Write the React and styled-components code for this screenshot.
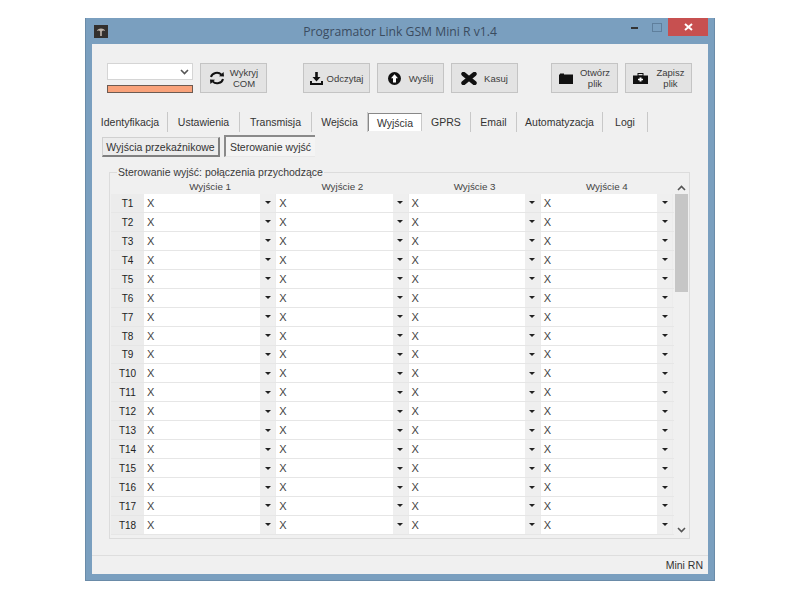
import React from "react";
import styled, { createGlobalStyle } from "styled-components";

const GlobalStyle = createGlobalStyle`
  html, body { margin: 0; padding: 0; background: #fff; }
  body { font-family: "Liberation Sans", Arial, sans-serif; color: #333; }
`;

const Page = styled.div`
  width: 800px;
  height: 600px;
  padding: 18px 0 0 85px;
  box-sizing: border-box;
  overflow: hidden;
`;

const Win = styled.div`
  width: 630px;
  height: 563px;
  box-sizing: border-box;
  background: #7a9fbf;
  border: 1px solid #6a8ba8;
  border-top: 0;
  padding: 0 6px 6px 6px;
  display: flex;
  flex-direction: column;
`;

const TitleBar = styled.div`
  height: 26px;
  flex: none;
  display: grid;
  grid-template-columns: 1fr auto 1fr;
  align-items: center;
`;

const TitleText = styled.div`
  font-family: "Open Sans", "Liberation Sans", sans-serif;
  font-size: 12.2px;
  color: #3a4c5f;
  white-space: nowrap;
`;

const AppIcon = styled.svg`
  width: 14px;
  height: 13px;
  margin-left: 2px;
  display: block;
`;

const WinControls = styled.div`
  display: flex;
  align-self: start;
  justify-self: end;
`;

const Ctl = styled.div`
  width: ${(p) => p.$w}px;
  height: 18px;
  background: ${(p) => (p.$close ? "#c75050" : "transparent")};
  display: flex;
  align-items: center;
  justify-content: center;
`;

const Client = styled.div`
  flex: 1;
  background: #f0f0f0;
  display: flex;
  flex-direction: column;
  min-height: 0;
`;

const Toolbar = styled.div`
  display: flex;
  align-items: flex-start;
  padding: 19px 0 0 15px;
  height: 45px;
  flex: none;
`;

const ComBox = styled.div`
  width: 86px;
  display: flex;
  flex-direction: column;
  gap: 5px;
  margin-right: 7px;
`;

const ComSelect = styled.div`
  height: 17px;
  background: #fff;
  border: 1px solid #d5d5d5;
  box-sizing: border-box;
  display: flex;
  align-items: center;
  justify-content: flex-end;
  padding-right: 3px;
`;

const ComBar = styled.div`
  height: 8px;
  background: #f9a27a;
  border: 1px solid #6d5b52;
  box-sizing: border-box;
`;

const ToolButton = styled.div`
  width: ${(p) => p.$w}px;
  height: 30px;
  margin-left: ${(p) => p.$gap || 0}px;
  box-sizing: border-box;
  background: #e3e3e3;
  border: 1px solid #c4c4c4;
  display: flex;
  align-items: center;
  justify-content: center;
  gap: ${(p) => p.$iconGap ?? 5}px;
  font-size: 9.5px;
  line-height: 11px;
  color: #3c3c3c;
  text-align: center;
`;

const Tabs = styled.div`
  display: flex;
  align-items: center;
  margin-top: 4px;
  padding-left: 1px;
  height: 20px;
  flex: none;
`;

const Tab = styled.div`
  height: ${(p) => (p.$active ? 18 : 20)}px;
  width: ${(p) => p.$w}px;
  font-size: 10.5px;
  display: flex;
  align-items: center;
  justify-content: center;
  box-sizing: border-box;
  color: #333;
  white-space: nowrap;
  background: ${(p) => (p.$active ? "#fff" : "transparent")};
  border-right: 1px solid #c8c8c8;
  border-left: ${(p) => (p.$active ? "1px solid #888" : "none")};
  border-top: ${(p) => (p.$active ? "1px solid #888" : "none")};
`;

const SubTabs = styled.div`
  display: flex;
  align-items: flex-end;
  padding: 3px 0 0 10px;
  gap: 4px;
  flex: none;
`;

const SubTab = styled.div`
  height: ${(p) => (p.$active ? 22 : 20)}px;
  width: ${(p) => p.$w}px;
  box-sizing: border-box;
  font-size: 10.5px;
  display: flex;
  align-items: center;
  justify-content: center;
  white-space: nowrap;
  color: #333;
  background: ${(p) => (p.$active ? "#f4f4f4" : "#ececec")};
  border-style: solid;
  border-width: ${(p) => (p.$active ? "2px 0 1px 2px" : "1px 2px 2px 1px")};
  border-color: ${(p) => (p.$active ? "#8a8a8a #eee #e8e8e8 #8a8a8a" : "#d0d0d0 #808080 #808080 #d0d0d0")};
`;

const Group = styled.div`
  margin: 15px 0 0 17px;
  width: 581px;
  height: 367px;
  box-sizing: border-box;
  border: 1px solid #dcdcdc;
  position: relative;
  padding: 8px 1px 0 1px;
  display: flex;
`;

const GroupTitle = styled.div`
  position: absolute;
  top: -7px;
  left: 7px;
  background: #f0f0f0;
  font-size: 10.5px;
  padding: 0 1px;
  color: #3a3a3a;
  line-height: 12px;
`;

const Grid = styled.div`
  width: 563px;
  flex: none;
`;

const HeadRow = styled.div`
  display: grid;
  grid-template-columns: 33px repeat(4, 132.25px);
  height: 13px;
  font-size: 9.8px;
  line-height: 12px;
  text-align: center;
  color: #444;
`;

const Row = styled.div`
  display: grid;
  grid-template-columns: 33px repeat(4, 132.25px);
  height: 18.95px;
  box-sizing: border-box;
  border-bottom: 1px solid #e6e6e6;
`;

const RowLabel = styled.div`
  background: #ececec;
  font-size: 10px;
  color: #222;
  display: flex;
  align-items: center;
  justify-content: center;
  padding-top: 1px;
`;

const Cell = styled.div`
  background: #fff;
  display: flex;
  border-right: 1px solid #ececec;
  font-size: 11px;
  color: #444;
`;

const CellValue = styled.div`
  flex: 1;
  padding-left: 3px;
  display: flex;
  align-items: center;
`;

const CellArrow = styled.div`
  width: 15px;
  background: #efefef;
  display: flex;
  align-items: center;
  justify-content: center;
  &::after {
    content: "";
    border: 3px solid transparent;
    border-top: 3px solid #222;
    border-bottom: 0;
  }
`;

const Scroll = styled.div`
  width: 15px;
  display: flex;
  flex-direction: column;
  align-items: center;
  height: 355px;
`;

const ScrollBtn = styled.div`
  height: 13px;
  flex: none;
  display: flex;
  align-items: center;
  justify-content: center;
`;

const ScrollThumb = styled.div`
  width: 13px;
  height: 98px;
  background: #c6c6c6;
`;

const ScrollRest = styled.div`
  flex: 1;
`;

const StatusBar = styled.div`
  margin-top: 16px;
  flex: 1;
  border-top: 1px solid #dedede;
  font-size: 10.5px;
  color: #333;
  display: flex;
  align-items: center;
  justify-content: flex-end;
  padding-right: 5px;
`;

const Chevron = ({ up }) => (
  <svg width="9" height="6" viewBox="0 0 9 6">
    <path d={up ? "M1 5L4.5 1.5L8 5" : "M1 1L4.5 4.5L8 1"} fill="none" stroke="#555" strokeWidth="1.6" />
  </svg>
);

const SyncIcon = () => (
  <svg width="16" height="14" viewBox="0 0 16 14">
    <path d="M2 6A6 5.4 0 0 1 12.4 3.6" fill="none" stroke="#111" strokeWidth="2" />
    <path d="M10 5.2L15 5.6L14.6 1Z" fill="#111" />
    <path d="M14 8A6 5.4 0 0 1 3.6 10.4" fill="none" stroke="#111" strokeWidth="2" />
    <path d="M6 8.8L1 8.4L1.4 13Z" fill="#111" />
  </svg>
);

const DownloadIcon = () => (
  <svg width="13" height="13" viewBox="0 0 13 13">
    <path d="M5.2 0H7.8V5H10.5L6.5 9.5L2.5 5H5.2Z" fill="#111" />
    <path d="M0 9H2V11H11V9H13V13H0Z" fill="#111" />
  </svg>
);

const UploadIcon = () => (
  <svg width="13" height="13" viewBox="0 0 13 13">
    <circle cx="6.5" cy="6.5" r="6.5" fill="#111" />
    <path d="M6.5 2.2L10 6.2H8V10.5H5V6.2H3Z" fill="#fff" />
  </svg>
);

const CrossIcon = () => (
  <svg width="16" height="13" viewBox="0 0 16 13">
    <path d="M2.5 2L13.5 11M13.5 2L2.5 11" stroke="#111" strokeWidth="4.4" strokeLinecap="round" />
  </svg>
);

const FolderIcon = () => (
  <svg width="14" height="11" viewBox="0 0 14 11">
    <path d="M0 1.5H1V0.5H5V1.5H14V11H0Z" fill="#111" />
  </svg>
);

const SaveIcon = () => (
  <svg width="15" height="11" viewBox="0 0 15 11">
    <rect x="5" y="0.5" width="5" height="2.5" fill="none" stroke="#111" />
    <rect y="2.5" width="15" height="8.5" fill="#111" />
    <path d="M6.5 4.5H8.5V5.7H10V7.3H8.5V8.5H6.5V7.3H5V5.7H6.5Z" fill="#fff" />
  </svg>
);

const tabs = [
  ["Identyfikacja", 75], ["Ustawienia", 72], ["Transmisja", 72], ["Wejścia", 56],
  ["Wyjścia", 54, true], ["GPRS", 49], ["Email", 46], ["Automatyzacja", 86], ["Logi", 45],
];

const rows = Array.from({ length: 18 }, (_, i) => `T${i + 1}`);
const outputs = ["Wyjście 1", "Wyjście 2", "Wyjście 3", "Wyjście 4"];

export default function App() {
  return (
    <Page>
      <GlobalStyle />
      <Win>
        <TitleBar>
          <AppIcon viewBox="0 0 14 13">
            <rect width="14" height="13" fill="#33302e" />
            <path d="M3 6C3 2.5 11 2.5 11 6C9.5 5 8.5 5.5 7.8 6.5V11H6.2V6.5C5.5 5.5 4.5 5 3 6Z" fill="#bdb3aa" />
          </AppIcon>
          <TitleText>Programator Link GSM Mini R v1.4</TitleText>
          <WinControls>
            <Ctl $w={22}>
              <svg width="8" height="3"><rect width="7" height="2" y="1" fill="#333" /></svg>
            </Ctl>
            <Ctl $w={22}>
              <svg width="10" height="9"><rect x="0.5" y="0.5" width="9" height="8" fill="none" stroke="#5f7f9c" /></svg>
            </Ctl>
            <Ctl $w={40} $close>
              <svg width="9" height="8"><path d="M1 1L8 7M8 1L1 7" stroke="#fff" strokeWidth="2" /></svg>
            </Ctl>
          </WinControls>
        </TitleBar>
        <Client>
          <Toolbar>
            <ComBox>
              <ComSelect><Chevron /></ComSelect>
              <ComBar />
            </ComBox>
            <ToolButton $w={67}>
              <SyncIcon />
              <span>Wykryj<br />COM</span>
            </ToolButton>
            <ToolButton $w={67} $gap={36} $iconGap={4}><DownloadIcon />Odczytaj</ToolButton>
            <ToolButton $w={67} $gap={7} $iconGap={8}><UploadIcon />Wyślij</ToolButton>
            <ToolButton $w={67} $gap={7} $iconGap={7}><CrossIcon />Kasuj</ToolButton>
            <ToolButton $w={67} $gap={33} $iconGap={7}>
              <FolderIcon />
              <span>Otwórz<br />plik</span>
            </ToolButton>
            <ToolButton $w={67} $gap={7} $iconGap={9}>
              <SaveIcon />
              <span>Zapisz<br />plik</span>
            </ToolButton>
          </Toolbar>
          <Tabs>
            {tabs.map(([label, w, active]) => (
              <Tab key={label} $w={w} $active={active}>{label}</Tab>
            ))}
          </Tabs>
          <SubTabs>
            <SubTab $w={118}>Wyjścia przekaźnikowe</SubTab>
            <SubTab $w={91} $active>Sterowanie wyjść</SubTab>
          </SubTabs>
          <Group>
            <GroupTitle>Sterowanie wyjść: połączenia przychodzące</GroupTitle>
            <Grid>
              <HeadRow>
                <div />
                {outputs.map((o) => <div key={o}>{o}</div>)}
              </HeadRow>
              {rows.map((r) => (
                <Row key={r}>
                  <RowLabel>{r}</RowLabel>
                  {outputs.map((o) => (
                    <Cell key={o}>
                      <CellValue>X</CellValue>
                      <CellArrow />
                    </Cell>
                  ))}
                </Row>
              ))}
            </Grid>
            <Scroll>
              <ScrollBtn><Chevron up /></ScrollBtn>
              <ScrollThumb />
              <ScrollRest />
              <ScrollBtn><Chevron /></ScrollBtn>
            </Scroll>
          </Group>
          <StatusBar>Mini RN</StatusBar>
        </Client>
      </Win>
    </Page>
  );
}
